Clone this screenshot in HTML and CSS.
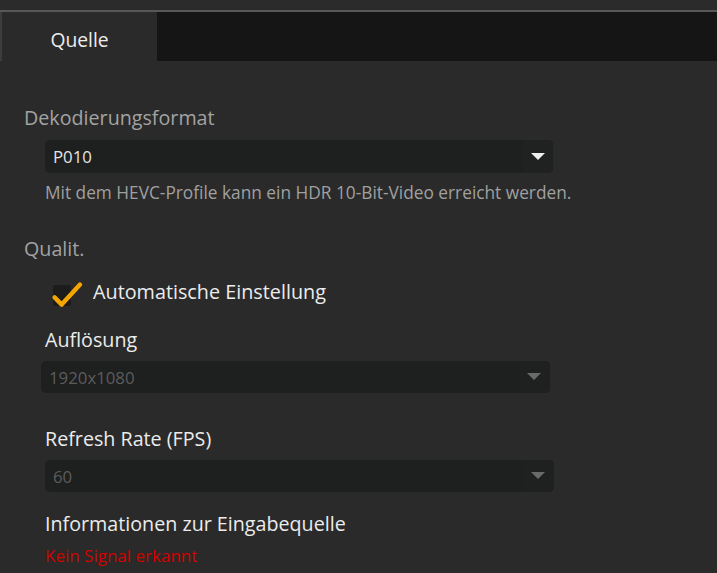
FILE: index.html
```html
<!DOCTYPE html>
<html lang="de">
<head>
<meta charset="utf-8">
<title>Quelle</title>
<link rel="stylesheet" href="styles.css">
</head>
<body>
<div class="top-strip"></div>
<div class="tabbar">
  <div class="tab active">Quelle</div>
</div>
<main class="content">
  <section class="group">
    <h2 class="group-title">Dekodierungsformat</h2>
    <div class="select sel-format">
      <span class="select-value">P010</span>
      <span class="select-btn"><span class="select-arrow"></span></span>
    </div>
    <p class="hint">Mit dem HEVC-Profile kann ein HDR 10-Bit-Video erreicht werden.</p>
  </section>
  <section class="group quality">
    <h2 class="group-title">Qualit.</h2>
    <label class="check">
      <span class="check-box">
        <svg viewBox="0 0 34 28" width="34" height="28" class="check-mark"><path d="M3.6 16.4 L10.7 23.6 L29 3.6" fill="none" stroke="#f4a600" stroke-width="4.4" stroke-linecap="round" stroke-linejoin="round"/></svg>
      </span>
      <span class="check-label">Automatische Einstellung</span>
    </label>
    <div class="field res">
      <div class="field-label">Auflösung</div>
      <div class="select disabled sel-res">
        <span class="select-value">1920x1080</span>
        <span class="select-btn"><span class="select-arrow"></span></span>
      </div>
    </div>
    <div class="field fps">
      <div class="field-label">Refresh Rate (FPS)</div>
      <div class="select disabled sel-fps">
        <span class="select-value">60</span>
        <span class="select-btn"><span class="select-arrow"></span></span>
      </div>
    </div>
    <div class="field info">
      <div class="field-label">Informationen zur Eingabequelle</div>
      <div class="status">Kein Signal erkannt</div>
    </div>
  </section>
</main>
</body>
</html>
```
FILE: styles.css
```css
* { box-sizing: border-box; }
html, body { margin: 0; padding: 0; }
body {
  width: 717px;
  height: 573px;
  overflow: hidden;
  background: #2a2a2a;
  font-family: "Open Sans", "Noto Sans", sans-serif;
  color: #e6e6e6;
}
.top-strip {
  height: 12px;
  background: #2b2b2b;
  border-bottom: 2px solid #575757;
}
.tabbar {
  height: 49px;
  background: #151515;
  display: flex;
}
.tab {
  width: 157px;
  background: #2a2a2a;
  border-left: 2px solid #3d3d3d;
  display: flex;
  align-items: center;
  justify-content: center;
  font-size: 19.3px;
  color: #ededed;
  padding-top: 5px;
}
.content {
  padding: 44px 0 0 24px;
}
.group-title {
  margin: 0;
  font-weight: normal;
  font-size: 19.7px;
  line-height: 26px;
  color: #a3a3a3;
}
.select {
  position: relative;
  width: 508px;
  height: 33px;
  margin-top: 9px;
  background: #1e1f1f;
  border-radius: 5px;
  display: flex;
  align-items: center;
  padding-left: 8px;
  overflow: hidden;
}
.sel-format { margin-left: 21px; }
.select-value {
  font-size: 16.8px;
  color: #e4e4e4;
  flex: 1;
}
.select-btn {
  width: 30px;
  align-self: stretch;
  background: #202121;
  position: relative;
}
.select-arrow {
  position: absolute;
  right: 8px;
  top: 13px;
  width: 0;
  height: 0;
  border-left: 7px solid transparent;
  border-right: 7px solid transparent;
  border-top: 7px solid #eeeeee;
}
.hint {
  margin: 9px 0 0 21px;
  font-size: 17.3px;
  line-height: 22px;
  color: #a0a0a0;
}
.quality { margin-top: 32px; }
.check {
  display: flex;
  align-items: flex-start;
  margin: 17px 0 0 29px;
}
.check-box {
  position: relative;
  width: 18px;
  height: 21px;
  background: #1c1c1c;
  border-radius: 2px;
  margin-top: 6px;
}
.check-mark {
  position: absolute;
  left: -2px;
  top: -4px;
}
.check-label {
  margin-left: 22px;
  font-size: 19.8px;
  line-height: 26px;
  color: #ececec;
}
.field { margin-left: 21px; }
.field-label {
  font-size: 19.7px;
  line-height: 26px;
  color: #ececec;
}
.res { margin-top: 21px; }
.res .select { margin-left: -4px; width: 509px; margin-top: 8px; height: 32px; }
.fps { margin-top: 33px; }
.fps .select { width: 509px; margin-top: 8px; height: 32px; }
.select.disabled .select-value { color: #5c5c5c; }
.select.disabled .select-btn { background: #1f2020; }
.select.disabled .select-arrow { border-top-color: #6a6a6a; top: 12px; right: 9px; }
.info { margin-top: 19px; }
.status {
  margin-top: 8px;
  font-size: 17px;
  line-height: 22px;
  color: #d40000;
}
```
